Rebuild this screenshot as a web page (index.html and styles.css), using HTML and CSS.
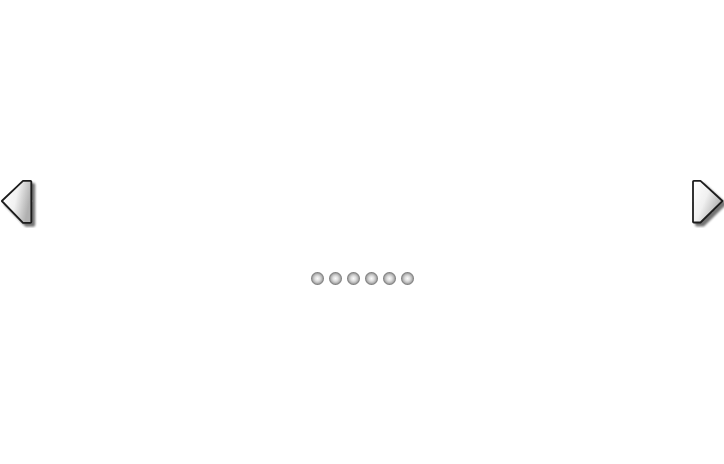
FILE: index.html
```html
<!DOCTYPE html>
<html>
<head>
<meta charset="utf-8">
<link rel="stylesheet" href="styles.css">
</head>
<body>
<div class="slider">
  <button class="nav nav-prev" aria-label="Previous">
    <svg width="40" height="52" viewBox="0 0 40 52">
      <defs>
        <linearGradient id="gl" x1="0" y1="0" x2="1" y2="0.3">
          <stop offset="0" stop-color="#ffffff"/>
          <stop offset="0.55" stop-color="#f2f2f2"/>
          <stop offset="1" stop-color="#b0b0b0"/>
        </linearGradient>
        <filter id="sh" x="-20%" y="-20%" width="150%" height="150%">
          <feGaussianBlur in="SourceAlpha" stdDeviation="1.3"/>
          <feOffset dx="2.5" dy="3" result="b"/>
          <feComponentTransfer><feFuncA type="linear" slope="0.55"/></feComponentTransfer>
          <feMerge><feMergeNode/><feMergeNode in="SourceGraphic"/></feMerge>
        </filter>
      </defs>
      <path d="M30.5 4.8 L23 4.8 L1.8 25 L23 46.8 L30.5 46.8 Q31.3 46.8 31.3 46 L31.3 5.6 Q31.3 4.8 30.5 4.8 Z" fill="url(#gl)" stroke="#1c1c1c" stroke-width="1.8" stroke-linejoin="round" filter="url(#sh)"/>
    </svg>
  </button>
  <div class="dots">
    <span class="dot"></span><span class="dot"></span><span class="dot"></span><span class="dot"></span><span class="dot"></span><span class="dot"></span>
  </div>
  <button class="nav nav-next" aria-label="Next">
    <svg width="36" height="52" viewBox="0 0 36 52">
      <defs>
        <linearGradient id="gr" x1="0" y1="0" x2="1" y2="0.6">
          <stop offset="0" stop-color="#ffffff"/>
          <stop offset="0.5" stop-color="#f0f0f0"/>
          <stop offset="1" stop-color="#a8a8a8"/>
        </linearGradient>
        <filter id="sh2" x="-20%" y="-20%" width="150%" height="150%">
          <feGaussianBlur in="SourceAlpha" stdDeviation="1.3"/>
          <feOffset dx="2.5" dy="3" result="b"/>
          <feComponentTransfer><feFuncA type="linear" slope="0.55"/></feComponentTransfer>
          <feMerge><feMergeNode/><feMergeNode in="SourceGraphic"/></feMerge>
        </filter>
      </defs>
      <path d="M5.8 4.8 L12.5 4.8 L34.5 25 L12.5 46.5 L5.8 46.5 Q5 46.5 5 45.7 L5 5.6 Q5 4.8 5.8 4.8 Z" fill="url(#gr)" stroke="#1c1c1c" stroke-width="1.8" stroke-linejoin="round" filter="url(#sh2)"/>
    </svg>
  </button>
</div>
</body>
</html>
```
FILE: styles.css
```css
html, body {
  margin: 0;
  padding: 0;
  background: #ffffff;
}
.slider {
  position: relative;
  width: 724px;
  height: 464px;
  overflow: hidden;
}
.nav {
  position: absolute;
  top: 176px;
  margin: 0;
  padding: 0;
  border: 0;
  background: none;
  line-height: 0;
  cursor: pointer;
}
.nav svg { display: block; }
.nav-prev { left: 0; }
.nav-next { left: 688px; }
.dots {
  display: flex;
  justify-content: center;
  gap: 5px;
  padding-top: 272px;
  padding-left: 1px;
}
.dot {
  width: 13px;
  height: 13px;
  border-radius: 50%;
  background: radial-gradient(circle at 50% 50%, #fbfbfb 0%, #dedede 28%, #b4b4b4 50%, #8a8a8a 62%, #555 78%, #3a3a3a 100%);
}
```
